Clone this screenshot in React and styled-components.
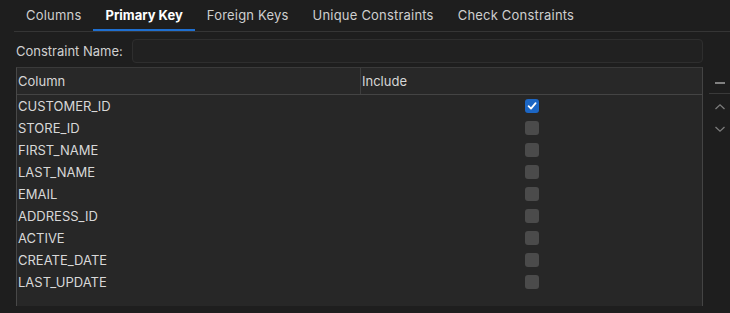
import styled, { createGlobalStyle } from "styled-components"

const GlobalStyle = createGlobalStyle`
  html, body {
    margin: 0;
    padding: 0;
    background: #1e1e1e;
  }
  body {
    font-family: Inter, "Noto Sans", sans-serif;
    font-size: 13px;
    color: #d4d4d4;
  }
`

const tabs = ["Columns", "Primary Key", "Foreign Keys", "Unique Constraints", "Check Constraints"]

const rows = [
  { name: "CUSTOMER_ID", include: true },
  { name: "STORE_ID" },
  { name: "FIRST_NAME" },
  { name: "LAST_NAME" },
  { name: "EMAIL" },
  { name: "ADDRESS_ID" },
  { name: "ACTIVE" },
  { name: "CREATE_DATE" },
  { name: "LAST_UPDATE" },
]

function App() {
  return (
    <Page>
      <GlobalStyle />
      <TabBar>
        {tabs.map((t) => (
          <Tab key={t} $active={t === "Primary Key"}>{t}</Tab>
        ))}
      </TabBar>

      <NameRow>
        <Label>Constraint Name:</Label>
        <NameInput />
      </NameRow>

      <Body>
        <Table>
          <HeaderRow>
            <HeadCell>Column</HeadCell>
            <HeadCell $divider>Include</HeadCell>
          </HeaderRow>
          {rows.map((r) => (
            <Row key={r.name}>
              <Cell>{r.name}</Cell>
              <CheckCell>
                <Check $on={r.include}>
                  {r.include && (
                    <svg width="10" height="10" viewBox="0 0 10 10">
                      <path d="M1.6 5.2 L4 7.6 L8.6 2.2" fill="none" stroke="#fff" strokeWidth="1.8" strokeLinecap="round" strokeLinejoin="round" />
                    </svg>
                  )}
                </Check>
              </CheckCell>
            </Row>
          ))}
        </Table>

        <SideTools>
          <ToolButton>
            <svg width="12" height="12" viewBox="0 0 12 12">
              <path d="M1 6 H11" stroke="#9a9a9a" strokeWidth="1.6" />
            </svg>
          </ToolButton>
          <ToolSep />
          <ToolButton>
            <svg width="12" height="12" viewBox="0 0 12 12">
              <path d="M1.5 8 L6 3.8 L10.5 8" fill="none" stroke="#7c7c7c" strokeWidth="1.3" />
            </svg>
          </ToolButton>
          <ToolButton>
            <svg width="12" height="12" viewBox="0 0 12 12">
              <path d="M1.5 4 L6 8.2 L10.5 4" fill="none" stroke="#7c7c7c" strokeWidth="1.3" />
            </svg>
          </ToolButton>
        </SideTools>
      </Body>
    </Page>
  )
}

const Page = styled.div`
  width: 730px;
  height: 313px;
  display: flex;
  flex-direction: column;
  overflow: hidden;
  background: #1e1e1e;
`

const TabBar = styled.div`
  display: flex;
  margin-left: 14px;
  height: 31px;
  border-bottom: 1px solid #353535;
`

const Tab = styled.div`
  padding: 0 12px;
  display: flex;
  align-items: center;
  height: 31px;
  box-sizing: border-box;
  color: ${(p) => (p.$active ? "#ffffff" : "#cfcfcf")};
  font-weight: ${(p) => (p.$active ? 700 : 400)};
  letter-spacing: ${(p) => (p.$active ? "0" : "0.2px")};
  border-bottom: 2px solid ${(p) => (p.$active ? "#1f6fd0" : "transparent")};
  margin-bottom: -1px;
  padding-top: 1px;
`

const NameRow = styled.div`
  display: flex;
  align-items: center;
  gap: 9px;
  padding: 7px 27px 0 16px;
  height: 23px;
`

const Label = styled.span`
  color: #d0d0d0;
`

const NameInput = styled.div`
  flex: 1;
  height: 22px;
  border: 1px solid #2e2e2e;
  border-radius: 4px;
  background: #212121;
`

const Body = styled.div`
  display: flex;
  margin-top: 5px;
  flex: 1;
  min-height: 0;
`

const Table = styled.div`
  margin-left: 16px;
  width: 687px;
  height: 239px;
  box-sizing: border-box;
  background: #272727;
  border-left: 1px solid #484848;
  border-right: 1px solid #444444;
  border-top: 1px solid #3a3a3a;
`

const HeaderRow = styled.div`
  display: grid;
  grid-template-columns: 343px 1fr;
  height: 26px;
  border-bottom: 1px solid #444444;
  background: #282828;
`

const HeadCell = styled.div`
  display: flex;
  align-items: center;
  padding-left: 1px;
  color: #d6d6d6;
  border-left: ${(p) => (p.$divider ? "1px solid #3e3e3e" : "none")};
`

const Row = styled.div`
  display: grid;
  grid-template-columns: 343px 1fr;
  height: 22px;
`

const Cell = styled.div`
  display: flex;
  align-items: center;
  padding-left: 1px;
  padding-bottom: 1px;
  color: #d8d8d8;
`

const CheckCell = styled.div`
  display: flex;
  align-items: center;
  padding-left: 165px;
`

const Check = styled.div`
  width: 14px;
  height: 14px;
  border-radius: 3px;
  background: ${(p) => (p.$on ? "#1c66c4" : "#4b4b4b")};
  display: flex;
  align-items: center;
  justify-content: center;
`

const SideTools = styled.div`
  width: 21px;
  margin-left: 6px;
  display: flex;
  flex-direction: column;
  align-items: center;
  padding-top: 5px;
`

const ToolButton = styled.div`
  width: 21px;
  height: 22px;
  display: flex;
  align-items: center;
  justify-content: center;
`

const ToolSep = styled.div`
  width: 21px;
  height: 1px;
  background: #3a3a3a;
  margin: -1px 0 2px;
`

export default App
